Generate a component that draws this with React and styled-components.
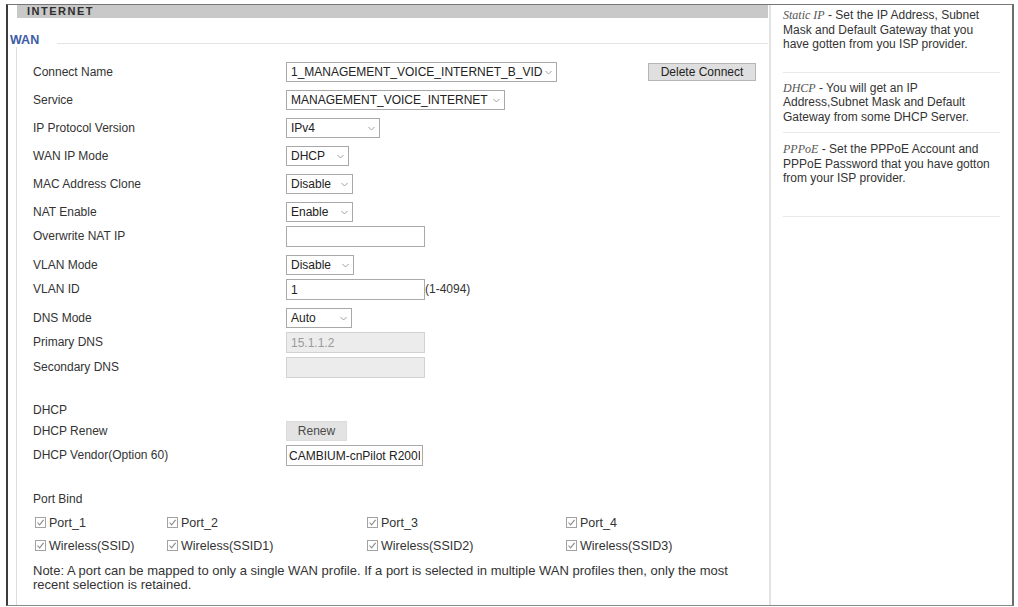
import styled, { createGlobalStyle } from "styled-components";

const Global = createGlobalStyle`
  html, body {
    margin: 0;
    padding: 0;
    background: #fff;
  }
  body {
    font-family: "Liberation Sans", Arial, sans-serif;
    font-size: 12px;
    color: #333;
  }
`

const Frame = styled.div`
  box-sizing: border-box;
  margin: 4px 0 0 6px;
  width: 1008px;
  height: 602px;
  display: flex;
  border-left: 2px solid #3c3c3c;
  border-right: 2px solid #6c6c6c;
  border-top: 1px solid #777;
  border-bottom: 1px solid #8a8a8a;
`

const Main = styled.div`
  width: 761px;
  display: flex;
  flex-direction: column;
`

const TitleBar = styled.div`
  height: 13px;
  margin: 0 1px 0 9px;
  background: #c9c9c9;
  h1 {
    margin: 0 0 0 10px;
    font-size: 11px;
    line-height: 13px;
    font-weight: bold;
    letter-spacing: 1.5px;
    color: #2e2e2e;
  }
`

const Legend = styled.div`
  display: flex;
  align-items: center;
  height: 14px;
  margin-top: 15px;
  padding-left: 2px;
  padding-right: 1px;
  span {
    font-size: 12.5px;
    font-weight: bold;
    color: #3d5ba8;
  }
`

const Rule = styled.div`
  flex: 1;
  height: 1px;
  margin: 6px 0 0 18px;
  background: #e3e3e3;
`

const Fieldset = styled.div`
  flex: 1;
  margin-left: 8px;
  border-left: 1px solid #dcdcdc;
  padding: 11px 13px 0 16px;
`

const Row = styled.div`
  display: flex;
  align-items: ${p => (p.$top ? "flex-start" : "center")};
  height: ${p => p.$h || 28}px;
  padding-top: ${p => p.$pt || 0}px;
  box-sizing: border-box;
`

const Label = styled.div`
  width: 253px;
  flex: none;
  line-height: 21px;
  white-space: nowrap;
`

const SelectBox = styled.div`
  box-sizing: border-box;
  display: inline-flex;
  align-items: center;
  justify-content: space-between;
  width: ${p => p.$w}px;
  height: 20px;
  padding: 0 4px 0 4px;
  border: 1px solid #a8a8a8;
  background: #fff;
  color: #222;
  white-space: nowrap;
`

const TextInput = styled.input`
  box-sizing: border-box;
  width: ${p => p.$w || 139}px;
  height: 21px;
  padding: 0 ${p => (p.$tight ? 2 : 4)}px;
  margin: 0;
  border: 1px solid ${p => (p.disabled ? "#d2d2d2" : "#aaa")};
  background: ${p => (p.disabled ? "#ececec" : "#fff")};
  font-family: "Liberation Sans", Arial, sans-serif;
  font-size: 12px;
  color: ${p => (p.disabled ? "#9a9a9a" : "#222")};
  outline: none;
`

const Button = styled.button`
  box-sizing: border-box;
  width: ${p => p.$w}px;
  height: ${p => p.$h || 20}px;
  margin: 0 ${p => (p.$push ? "0 0 auto" : "0")};
  padding: 0;
  border: 1px solid ${p => (p.$flat ? "#dcdcdc" : "#b5b5b5")};
  background: ${p => (p.$flat ? "#e3e3e3" : "#dfdfdf")};
  font-family: "Liberation Sans", Arial, sans-serif;
  font-size: 12px;
  color: ${p => (p.$flat ? "#4a4a4a" : "#222")};
`

const Hint = styled.span`
  line-height: 21px;
  color: #333;
`

const Section = styled.div`
  height: 20px;
  line-height: 20px;
  margin-top: ${p => p.$mt}px;
`

const Checks = styled.div`
  display: grid;
  grid-template-columns: 132px 200px 199px auto;
  grid-auto-rows: 23px;
  align-items: center;
  margin-top: 2px;
  padding-left: 2px;
  font-size: 12.5px;
`

const Check = styled.label`
  display: flex;
  align-items: center;
  gap: 3px;
  white-space: nowrap;
`

const Box = styled.span`
  box-sizing: border-box;
  width: 11px;
  height: 11px;
  border: 1px solid #a2a2a2;
  background: #fff;
  display: inline-flex;
  align-items: center;
  justify-content: center;
`

const Note = styled.p`
  margin: 7px 0 0;
  font-size: 13px;
  line-height: 14px;
  color: #333;
`

const Side = styled.aside`
  flex: 1;
  border-left: 2px solid #e3e3e3;
  padding: 0 12px;
`

const Tip = styled.div`
  padding: ${p => p.$pt}px 0 ${p => p.$pb}px;
  border-bottom: 1px solid #e8e8e8;
  line-height: 14.5px;
  color: #333;
  span {
    display: block;
    white-space: nowrap;
  }
  em {
    font-family: "Liberation Serif", "Times New Roman", serif;
    color: #555;
  }
`

const Chevron = () => (
  <svg width="7" height="5" viewBox="0 0 7 5">
    <path d="M0.5 1 L3.5 4 L6.5 1" fill="none" stroke="#a0a0a0" strokeWidth="1" />
  </svg>
)

const Tick = () => (
  <svg width="9" height="9" viewBox="0 0 9 9">
    <path d="M1.5 4.5 L3.6 6.8 L7.6 1.8" fill="none" stroke="#8a8a8a" strokeWidth="1.1" />
  </svg>
)

const Select = ({ w, children }) => (
  <SelectBox $w={w}>
    <span>{children}</span>
    <Chevron />
  </SelectBox>
)

const ports = [
  "Port_1", "Port_2", "Port_3", "Port_4",
  "Wireless(SSID)", "Wireless(SSID1)", "Wireless(SSID2)", "Wireless(SSID3)",
]

function App() {
  return (
    <>
      <Global />
      <Frame>
        <Main>
          <TitleBar><h1>INTERNET</h1></TitleBar>
          <Legend>
            <span>WAN</span>
            <Rule />
          </Legend>
          <Fieldset>
            <Row>
              <Label>Connect Name</Label>
              <Select w={271}>1_MANAGEMENT_VOICE_INTERNET_B_VID</Select>
              <Button $w={108} $h={18} $push>Delete Connect</Button>
            </Row>
            <Row>
              <Label>Service</Label>
              <Select w={219}>MANAGEMENT_VOICE_INTERNET</Select>
            </Row>
            <Row>
              <Label>IP Protocol Version</Label>
              <Select w={94}>IPv4</Select>
            </Row>
            <Row>
              <Label>WAN IP Mode</Label>
              <Select w={63}>DHCP</Select>
            </Row>
            <Row>
              <Label>MAC Address Clone</Label>
              <Select w={67}>Disable</Select>
            </Row>
            <Row>
              <Label>NAT Enable</Label>
              <Select w={67}>Enable</Select>
            </Row>
            <Row $h={25} $top>
              <Label>Overwrite NAT IP</Label>
              <TextInput readOnly value="" />
            </Row>
            <Row>
              <Label>VLAN Mode</Label>
              <Select w={68}>Disable</Select>
            </Row>
            <Row $h={25} $top>
              <Label>VLAN ID</Label>
              <TextInput readOnly value="1" />
              <Hint>(1-4094)</Hint>
            </Row>
            <Row>
              <Label>DNS Mode</Label>
              <Select w={66}>Auto</Select>
            </Row>
            <Row $h={25} $top>
              <Label>Primary DNS</Label>
              <TextInput disabled value="15.1.1.2" readOnly />
            </Row>
            <Row $h={25} $top>
              <Label>Secondary DNS</Label>
              <TextInput disabled value="" readOnly />
            </Row>

            <Section $mt={18}>DHCP</Section>
            <Row $h={22}>
              <Label>DHCP Renew</Label>
              <Button $w={61} $flat>Renew</Button>
            </Row>
            <Row $h={25} $pt={3} $top>
              <Label>DHCP Vendor(Option 60)</Label>
              <TextInput $w={137} $tight readOnly value="CAMBIUM-cnPilot R200I" />
            </Row>

            <Section $mt={22}>Port Bind</Section>
            <Checks>
              {ports.map(name => (
                <Check key={name}>
                  <Box><Tick /></Box>
                  {name}
                </Check>
              ))}
            </Checks>
            <Note>
              Note: A port can be mapped to only a single WAN profile. If a port is selected in multiple WAN profiles then, only the most
              <br />
              recent selection is retained.
            </Note>
          </Fieldset>
        </Main>

        <Side>
          <Tip $pt={3} $pb={20}>
            <span><em>Static IP</em> - Set the IP Address, Subnet</span>
            <span>Mask and Default Gateway that you</span>
            <span>have gotten from you ISP provider.</span>
          </Tip>
          <Tip $pt={8} $pb={8}>
            <span><em>DHCP</em> - You will get an IP</span>
            <span>Address,Subnet Mask and Default</span>
            <span>Gateway from some DHCP Server.</span>
          </Tip>
          <Tip $pt={9} $pb={30}>
            <span><em>PPPoE</em> - Set the PPPoE Account and</span>
            <span>PPPoE Password that you have gotton</span>
            <span>from your ISP provider.</span>
          </Tip>
        </Side>
      </Frame>
    </>
  );
}

export default App;
